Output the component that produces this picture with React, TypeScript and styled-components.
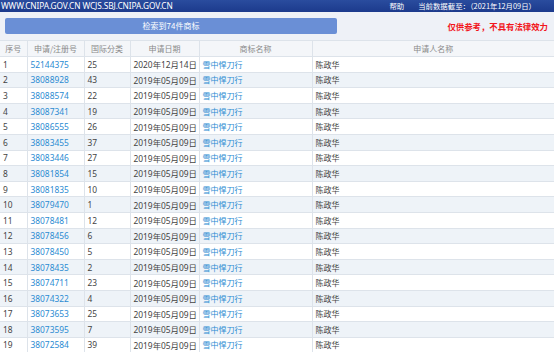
import React from "react";
import styled, { createGlobalStyle } from "styled-components";

const Global = createGlobalStyle`
  html, body { margin: 0; padding: 0; background: #fff; overflow: hidden; }
  body { font-family: "Noto Sans CJK SC", "Noto Sans", sans-serif; }
`;

const Page = styled.div`
  width: 554px;
  height: 352px;
  overflow: hidden;
  display: flex;
  flex-direction: column;
`;

const TopBar = styled.div`
  height: 12px;
  flex: none;
  background: linear-gradient(#2a4c9e, #1c3a8c);
  color: #fff;
  font-size: 7.4px;
  line-height: 12px;
  display: flex;
  align-items: center;
  justify-content: space-between;
  padding: 0 18px 0 1px;
  white-space: nowrap;
`;

const SiteLinks = styled.span`
  font-family: "Noto Sans", sans-serif;
  font-size: 8.3px;
  letter-spacing: -0.1px;
`;

const TopRight = styled.div`
  display: flex;
  gap: 14px;
`;

const Toolbar = styled.div`
  height: 29px;
  flex: none;
  background: #eef1f7;
  display: flex;
  align-items: center;
  justify-content: space-between;
  padding: 0 6px 0 5px;
  box-sizing: border-box;
  border-bottom: 1px solid #dde3ea;
`;

const SearchButton = styled.div`
  width: 332px;
  height: 16px;
  background: #6a8fd6;
  border-radius: 2px;
  color: #fff;
  font-size: 8px;
  line-height: 16px;
  text-align: center;
`;

const Notice = styled.span`
  color: #f2151b;
  font-size: 8.4px;
  font-weight: bold;
`;

const Table = styled.table`
  border-collapse: collapse;
  table-layout: fixed;
  width: 554px;
  font-size: 8px;
`;

const Th = styled.th`
  height: 15px;
  padding: 0;
  font-weight: normal;
  color: #8a8a8a;
  background: #f4f6f9;
  border-right: 1px solid #dde3ea;
  border-bottom: 1px solid #dde3ea;
  text-align: center;
  &:last-child { border-right: none; }
`;

const Tr = styled.tr<{ $alt: boolean }>`
  background: ${(p) => (p.$alt ? "#eef3f8" : "#ffffff")};
`;

const Td = styled.td<{ $link?: boolean }>`
  height: 14.6px;
  padding: 0 0 0 3px;
  color: ${(p) => (p.$link ? "#2b8bd2" : "#444444")};
  border-right: 1px solid #dde3ea;
  border-bottom: 1px solid #dde3ea;
  white-space: nowrap;
  overflow: hidden;
  &:last-child { border-right: none; }
`;

const NumCell = styled(Td)`
  font-family: "Noto Sans", "Noto Sans CJK SC", sans-serif;
  font-size: 8.4px;
`;

const rows: [string, string][] = [
  ["52144375", "25"],
  ["38088928", "43"],
  ["38088574", "22"],
  ["38087341", "19"],
  ["38086555", "26"],
  ["38083455", "37"],
  ["38083446", "27"],
  ["38081854", "15"],
  ["38081835", "10"],
  ["38079470", "1"],
  ["38078481", "12"],
  ["38078456", "6"],
  ["38078450", "5"],
  ["38078435", "2"],
  ["38074711", "23"],
  ["38074322", "4"],
  ["38073653", "25"],
  ["38073595", "7"],
  ["38072584", "39"],
];

export default function App() {
  return (
    <Page>
      <Global />
      <TopBar>
        <SiteLinks>WWW.CNIPA.GOV.CN WCJS.SBJ.CNIPA.GOV.CN</SiteLinks>
        <TopRight>
          <span>帮助</span>
          <span>当前数据截至：（2021年12月09日）</span>
        </TopRight>
      </TopBar>
      <Toolbar>
        <SearchButton>检索到74件商标</SearchButton>
        <Notice>仅供参考，不具有法律效力</Notice>
      </Toolbar>
      <Table>
        <colgroup>
          <col style={{ width: 27 }} />
          <col style={{ width: 57 }} />
          <col style={{ width: 46 }} />
          <col style={{ width: 69 }} />
          <col style={{ width: 113 }} />
          <col />
        </colgroup>
        <thead>
          <tr>
            <Th>序号</Th>
            <Th>申请/注册号</Th>
            <Th>国际分类</Th>
            <Th>申请日期</Th>
            <Th>商标名称</Th>
            <Th>申请人名称</Th>
          </tr>
        </thead>
        <tbody>
          {rows.map(([no, cls], i) => (
            <Tr key={no} $alt={i % 2 === 1}>
              <NumCell>{i + 1}</NumCell>
              <NumCell $link>{no}</NumCell>
              <NumCell>{cls}</NumCell>
              <NumCell>{i === 0 ? "2020年12月14日" : "2019年05月09日"}</NumCell>
              <Td $link>雪中悍刀行</Td>
              <Td>陈政华</Td>
            </Tr>
          ))}
        </tbody>
      </Table>
    </Page>
  );
}
